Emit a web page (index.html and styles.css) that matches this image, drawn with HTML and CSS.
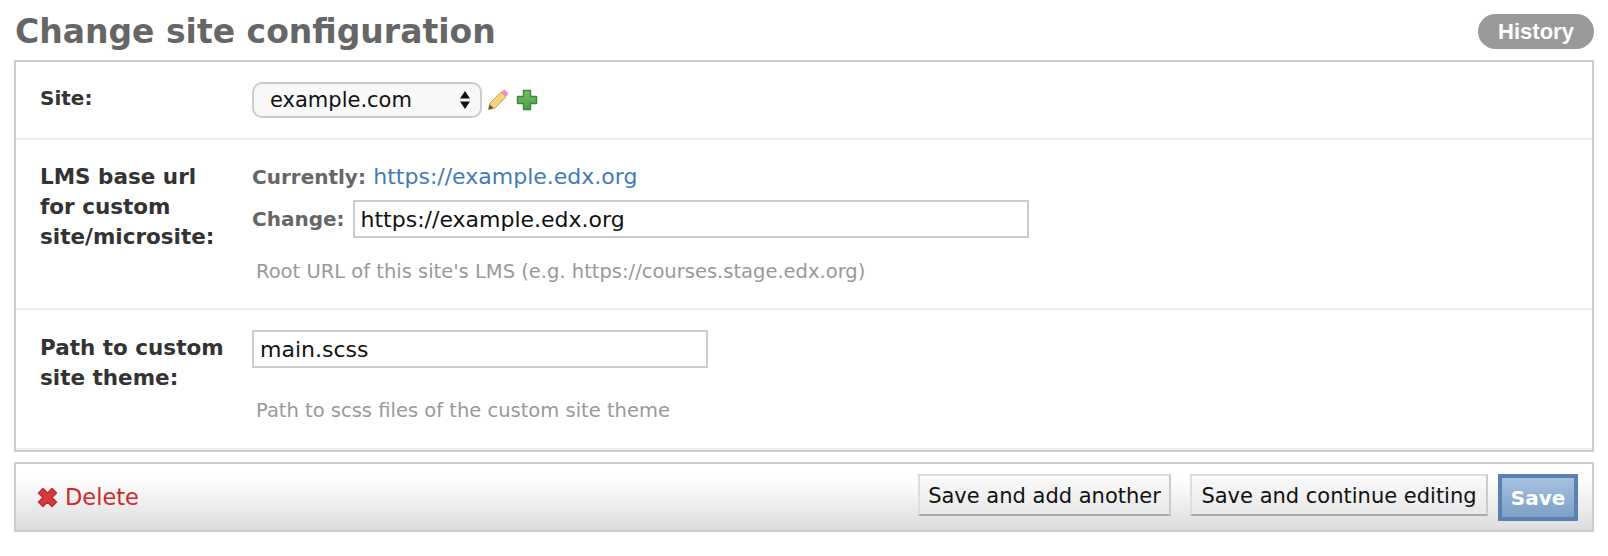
FILE: index.html
```html
<!DOCTYPE html>
<html lang="en">
<head>
  <meta charset="UTF-8" />
  <title>Change site configuration</title>
  <link rel="stylesheet" href="styles.css">
</head>
<body>

  <div class="page-head">
    <h1>Change site configuration</h1>
    <a class="history" href="#">History</a>
  </div>

  <form class="config-form">
    <div class="module">
      <div class="form-row row-site">
        <label class="row-label">Site:</label>
        <div class="row-field site-field">
          <span class="select-wrap">
            <select class="site-select"><option>example.com</option></select>
            <svg class="select-arrows" width="12" height="20" viewBox="0 0 12 20"><path d="M6 1 L11 8.5 H1 Z M1 11.5 H11 L6 19 Z" fill="#111"/></svg>
          </span>
          <svg class="icon-pencil" width="22" height="22" viewBox="0 0 22 22">
            <path d="M1.500 20.500 L3 14 L14 3 L19 8 L8 19 Z" fill="#f3d27e" stroke="#cfa957" stroke-width="1"/>
            <path d="M14 3 L16.500 1 Q17.500 .5 18.500 1.500 L21 4 Q21.500 5 20.500 6 L19 8 Z" fill="#ee8ed8"/>
            <path d="M1.500 20.500 L2.700 15.500 L6.500 19.300 Z" fill="#6b4a2a"/>
          </svg>
          <svg class="icon-plus" width="22" height="22" viewBox="0 0 22 22">
            <defs>
              <linearGradient id="plus-fill" x1="0" y1="0" x2="0" y2="1">
                <stop offset="0" stop-color="#7cc06c"/>
                <stop offset="1" stop-color="#4a9c46"/>
              </linearGradient>
            </defs>
            <path d="M7.500 1.500 H14.500 V7.500 H20.500 V14.500 H14.500 V20.500 H7.500 V14.500 H1.500 V7.500 H7.500 Z" fill="url(#plus-fill)" stroke="#3c8a38" stroke-width="1.500" stroke-linejoin="round"/>
          </svg>
        </div>
      </div>

      <div class="form-row row-lms">
        <label class="row-label">LMS base url for custom site/microsite:</label>
        <div class="row-field">
          <p class="current"><span class="field-tag">Currently:</span> <a href="#">https://example.edx.org</a></p>
          <p class="change"><span class="field-tag">Change:</span> <input class="text-input input-wide" type="text" value="https://example.edx.org"></p>
          <p class="help">Root URL of this site's LMS (e.g. https://courses.stage.edx.org)</p>
        </div>
      </div>

      <div class="form-row row-theme">
        <label class="row-label">Path to custom site theme:</label>
        <div class="row-field">
          <input class="text-input input-mid" type="text" value="main.scss">
          <p class="help">Path to scss files of the custom site theme</p>
        </div>
      </div>
    </div>

    <div class="submit-row">
      <a class="delete-link" href="#">
        <svg width="21" height="21" viewBox="0 0 21 21"><path d="M6 1.500 L10.500 6 L15 1.500 L19.500 6 L15 10.500 L19.500 15 L15 19.500 L10.500 15 L6 19.500 L1.500 15 L6 10.500 L1.500 6 Z" fill="#d8393c" stroke="#b93034" stroke-width="1.500" stroke-linejoin="round"/></svg>
        Delete
      </a>
      <div class="submit-buttons">
        <button class="btn btn-add" type="button">Save and add another</button>
        <button class="btn btn-continue" type="button">Save and continue editing</button>
        <button class="btn-save" type="submit">Save</button>
      </div>
    </div>
  </form>

</body>
</html>
```

FILE: styles.css
```css
body {
  margin: 0;
  padding: 0 14px;
  background-color: white;
  font-family: "DejaVu Sans", sans-serif;
  color: #333;
}

.page-head {
  display: flex;
  justify-content: space-between;
  align-items: center;
  height: 60px;
  padding-top: 4px;
  box-sizing: border-box;
}

h1 {
  margin: 0 0 0 1px;
  font-size: 33px;
  font-weight: bold;
  color: #666;
  line-height: 50px;
}

.history {
  margin-bottom: 1px;
  width: 116px;
  height: 35px;
  line-height: 35px;
  border-radius: 18px;
  background-color: #999;
  color: white;
  font-family: "Liberation Sans", sans-serif;
  font-size: 22px;
  font-weight: bold;
  text-align: center;
  text-decoration: none;
}

.module {
  border: 2px solid #ccc;
}

.form-row {
  display: flex;
  box-sizing: border-box;
  border-bottom: 2px solid #eee;
}

.form-row:last-child {
  border-bottom: none;
  box-shadow: inset 0 -2px 0 #eee;
}

.row-site { height: 78px; padding-top: 20px; }
.row-lms { height: 170px; padding-top: 20px; }
.row-theme { height: 140px; padding-top: 20px; }

.row-label {
  width: 212px;
  padding-left: 24px;
  box-sizing: border-box;
  font-size: 21.5px;
  font-weight: bold;
  line-height: 30px;
}

.row-site .row-label { padding-top: 1px; font-size: 20px; }
.row-lms .row-label { margin-top: 2px; }
.row-theme .row-label { margin-top: 3px; }

.row-field {
  margin-left: 24px;
  flex: 1;
}

.site-field {
  display: flex;
  align-items: center;
  align-self: flex-start;
  height: 36px;
}

.select-wrap {
  position: relative;
  display: block;
  height: 36px;
}

.site-select {
  appearance: none;
  width: 230px;
  height: 36px;
  padding: 0 0 0 16px;
  border: 2px solid #ccc;
  border-radius: 10px;
  background-color: #f8f8f8;
  font-family: inherit;
  font-size: 21px;
  color: #111;
}

.select-arrows {
  position: absolute;
  right: 11px;
  top: 8px;
}

.icon-pencil { margin-left: 5px; }
.icon-plus { margin-left: 7px; }

.row-lms .row-field p { margin: 0; }

.current {
  line-height: 30px;
  font-size: 20px;
  margin-top: 2px !important;
}

.field-tag {
  font-weight: bold;
  color: #666;
}

.current a {
  margin-left: 1px;
  font-size: 22px;
  color: #447bb3;
  text-decoration: none;
}

.change {
  display: flex;
  align-items: center;
  margin-top: 8px !important;
  font-size: 20px;
}

.text-input {
  height: 38px;
  padding: 0 6px;
  box-sizing: border-box;
  border: 2px solid #ccc;
  font-family: inherit;
  font-size: 22px;
  color: #111;
}

.input-wide { width: 676px; margin-left: 8px; }
.input-mid { width: 456px; display: block; }

.help {
  margin: 0;
  font-size: 19.5px;
  color: #999;
  padding-left: 4px;
}

.row-lms .row-field .help { margin-top: 22px; }
.row-theme .help { margin-top: 31px; }

.submit-row {
  display: flex;
  justify-content: space-between;
  align-items: center;
  height: 70px;
  margin-top: 10px;
  padding: 0 14px 0 21px;
  box-sizing: border-box;
  border: 2px solid #ccc;
  background: linear-gradient(#fff 20%, #ddd 100%);
}

.delete-link {
  display: flex;
  align-items: center;
  gap: 7px;
  font-size: 22.500px;
  color: #cc2a2f;
  text-decoration: none;
}

.submit-buttons {
  display: flex;
  align-items: flex-start;
  padding-top: 2px;
  align-self: flex-start;
  margin-top: 8px;
}

.btn {
  height: 42px;
  padding: 2px 0 0;
  border: 2px solid #ddd;
  border-bottom-color: #aaa;
  border-right-color: #ccc;
  background: linear-gradient(#fafafa, #e8e8e8);
  font-family: inherit;
  font-size: 21px;
  color: #111;
}

.btn-add { width: 253px; }
.btn-continue { width: 298px; margin-left: 19px; }

.btn-save {
  width: 80px;
  height: 47px;
  margin-left: 10px;
  padding: 0;
  border: 4px solid #5b80b2;
  background: linear-gradient(#a7c1dd, #7ba0c8);
  font-family: inherit;
  font-size: 20px;
  font-weight: bold;
  color: white;
}
```
